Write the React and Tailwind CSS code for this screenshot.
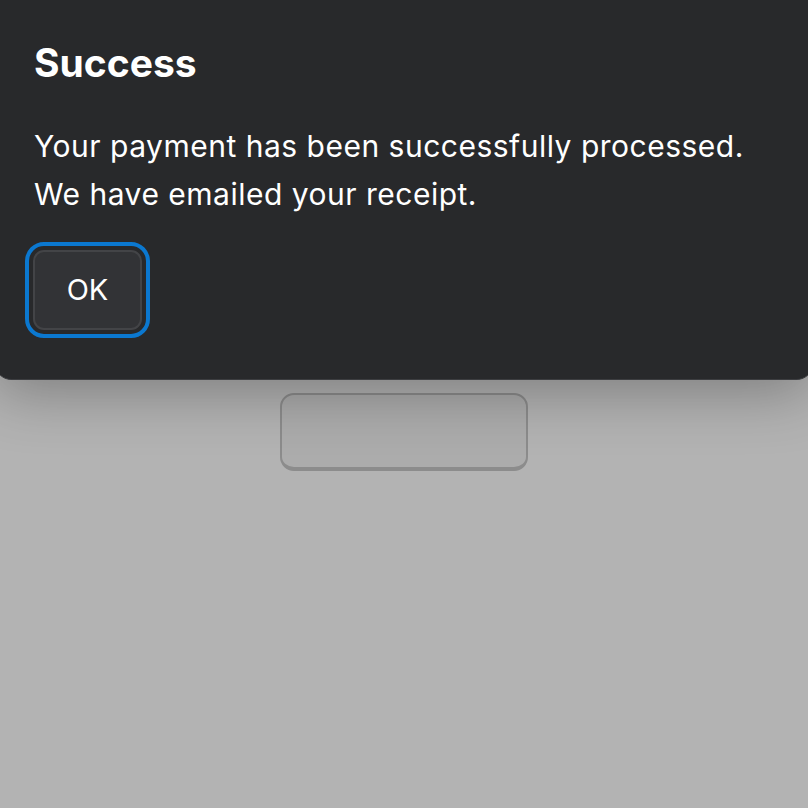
export default function App() {
  return (
    <div
      className="relative w-[808px] h-[808px] overflow-hidden bg-[#b3b3b3]"
      style={{ fontFamily: 'Inter, "Noto Sans", sans-serif' }}
    >
      {/* button behind the overlay */}
      <div className="flex justify-center pt-[393px]">
        <div className="w-[248px] h-[78px] rounded-[14px] border-2 border-[#8c8c8c] border-b-4 bg-[#acacac]" />
      </div>

      {/* dialog */}
      <div className="absolute left-[-6px] right-[-6px] top-0 h-[380px] rounded-b-[18px] bg-[#28292b] border-b border-[#3c3d40] shadow-[0_12px_60px_rgba(0,0,0,0.3)] pl-[40px] pt-[40px]">
        <h2 className="text-[39px] leading-[46px] font-bold text-white">Success</h2>
        <p className="mt-[36px] text-[30px] leading-[48px] text-white tracking-[0.5px]">
          Your payment has been successfully processed.
          <br />
          We have emailed your receipt.
        </p>
        <button className="mt-[32px] ml-[-1px] w-[109px] h-[80px] rounded-[11px] bg-[#323336] border-2 border-[#434447] text-white text-[29px] outline-4 outline-[#0b78d0] outline-offset-[4px]">
          OK
        </button>
      </div>
    </div>
  );
}
